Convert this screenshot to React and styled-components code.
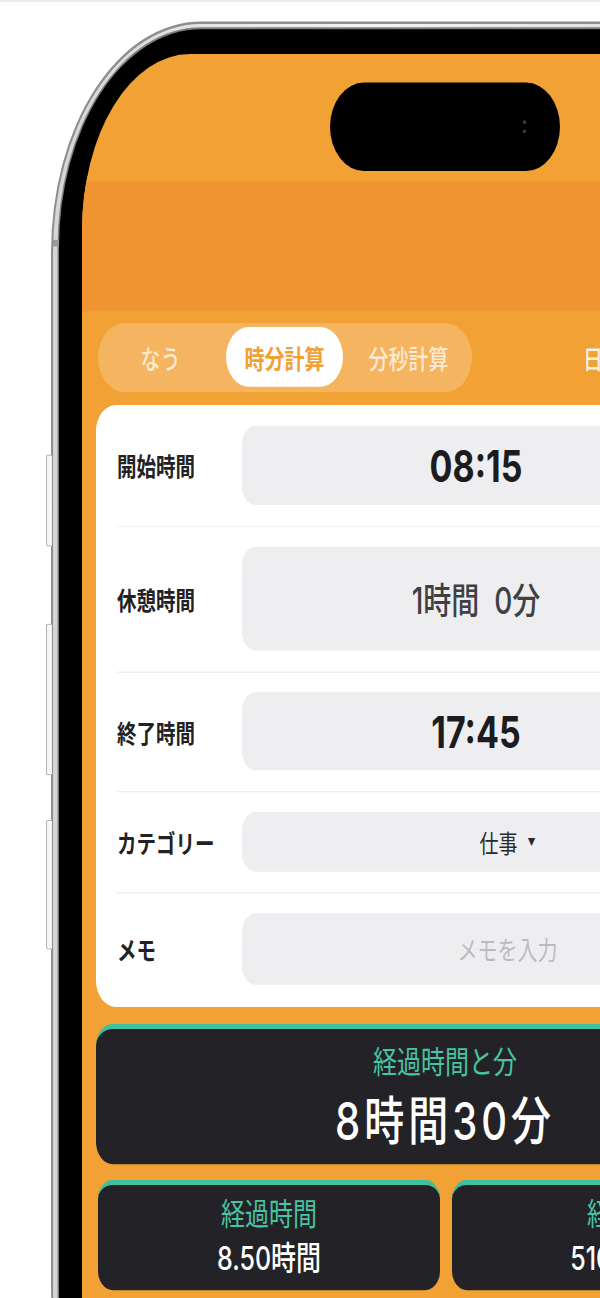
import React from 'react';
import styled, { createGlobalStyle } from 'styled-components';

const GlobalStyle = createGlobalStyle`
  html, body {
    margin: 0;
    padding: 0;
    background: #fff;
  }
  body {
    width: 600px;
    height: 1298px;
    overflow: hidden;
    font-family: Inter, "Noto Sans CJK JP", sans-serif;
  }
`;

const Page = styled.div`
  border-top: 2px solid #ececec;
  height: 1296px;
  overflow: hidden;
`;

// the reference is stretched vertically, so the whole mockup is scaled the same way
const Stage = styled.div`
  transform: scaleY(1.3);
  transform-origin: 0 0;
  padding: 15px 0 0 51px;
`;

const Phone = styled.div`
  position: relative;
  width: 790px;
  box-sizing: border-box;
  padding: 4px 6px;
  background: linear-gradient(90deg, #d6d6d8, #f4f4f4 40%, #d0d0d2);
  border: 2px solid #8e8e90;
  border-radius: 150px / 178px;
`;

const SideButton = styled.div`
  position: absolute;
  left: -7px;
  top: ${p => p.$top}px;
  height: ${p => p.$h}px;
  width: 5px;
  background: #f6f6f6;
  border: 1px solid #b3b3b5;
  border-right: none;
  border-radius: 2px 0 0 2px;
`;

const SideMark = styled.div`
  position: absolute;
  left: 0;
  top: 166px;
  width: 6px;
  height: 5px;
  background: #9a9a9c;
`;

const Bezel = styled.div`
  background: #000;
  padding: 19px 23px;
  border-radius: 142px / 168px;
  box-shadow: 0 0 0 1.5px #7d7d80;
`;

const Screen = styled.div`
  width: 726px;
  height: 1100px;
  background: #f2a134;
  border-radius: 108px / 136px;
  overflow: hidden;
  display: flex;
  flex-direction: column;
`;

const StatusArea = styled.div`
  height: 98px;
  box-sizing: border-box;
  padding-top: 22px;
  display: flex;
  justify-content: center;
`;

const Island = styled.div`
  width: 230px;
  height: 68px;
  background: #000;
  border-radius: 34px;
  display: flex;
  align-items: center;
  justify-content: flex-end;
  padding-right: 34px;
  box-sizing: border-box;
`;

const Lens = styled.div`
  display: flex;
  flex-direction: column;
  gap: 4px;
  span {
    width: 3px;
    height: 3px;
    border-radius: 50%;
    background: #3a3d48;
  }
`;

const Band = styled.div`
  height: 100px;
  background: #f09432;
`;

const Content = styled.div`
  padding: 8.5px 14px 0;
  display: flex;
  flex-direction: column;
`;

const TabRow = styled.div`
  display: flex;
  align-items: center;
`;

const Segment = styled.div`
  margin-left: 2px;
  width: 374px;
  height: 53px;
  box-sizing: border-box;
  padding: 3.5px 4px;
  display: flex;
  gap: 7px;
  border-radius: 27px;
  background: rgba(255, 255, 255, 0.22);
`;

const SegItem = styled.div`
  width: 117px;
  display: flex;
  align-items: center;
  justify-content: center;
  border-radius: 23px;
  font-size: 20px;
  font-weight: ${p => (p.$active ? 700 : 500)};
  color: ${p => (p.$active ? '#f1a035' : 'rgba(255, 255, 255, 0.72)')};
  background: ${p => (p.$active ? '#fff' : 'transparent')};
`;

const ExtraTab = styled.div`
  margin-left: 111px;
  font-size: 20px;
  font-weight: 500;
  color: rgba(255, 255, 255, 0.88);
  white-space: nowrap;
`;

const Card = styled.div`
  margin-top: 10px;
  background: #fff;
  border-radius: 20px;
  padding: 1px 21px;
`;

const Row = styled.div`
  display: flex;
  align-items: center;
  padding: 15.5px 0;
  & + & {
    border-top: 1px solid #eeeeee;
  }
`;

const Label = styled.div`
  width: 125px;
  flex-shrink: 0;
  font-size: 19.5px;
  font-weight: 600;
  color: #222224;
`;

const Field = styled.div`
  flex: 1;
  height: ${p => p.$h}px;
  margin-right: ${p => (p.$narrow ? 63 : 0)}px;
  background: #eeeef0;
  border-radius: 14px;
  display: flex;
  align-items: center;
  justify-content: center;
  gap: 10px;
`;

const TimeText = styled.span`
  font-size: 34px;
  font-weight: 700;
  color: #1c1c1e;
`;

const BreakText = styled.span`
  font-size: 28px;
  font-weight: 500;
  color: #404042;
  white-space: pre;
`;

const PlainText = styled.span`
  font-size: 19px;
  color: #2a2a2c;
`;

const Caret = styled.span`
  font-size: 8px;
  color: #2a2a2c;
`;

const Placeholder = styled.span`
  font-size: 20px;
  color: #bbbbbf;
`;

const ResultCard = styled.div`
  height: ${p => p.$h}px;
  box-sizing: border-box;
  background: #232327;
  border-top: 4px solid #3fc09e;
  border-radius: ${p => p.$r}px;
  display: flex;
  flex-direction: column;
  align-items: center;
  padding-top: ${p => p.$pt}px;
  gap: ${p => p.$gap}px;
`;

const BigCard = styled(ResultCard)`
  margin-top: 13px;
`;

const SmallGrid = styled.div`
  margin-top: 12px;
  display: grid;
  grid-template-columns: 1fr 1fr;
  gap: 12px;
  padding-left: 2px;
`;

const ResultTitle = styled.div`
  font-size: 24px;
  line-height: ${p => p.$lh}px;
  font-weight: 400;
  color: #48c3a3;
  white-space: nowrap;
`;

const BigValue = styled.div`
  font-size: 40px;
  line-height: 44px;
  font-weight: 500;
  letter-spacing: 4px;
  color: #fff;
  white-space: nowrap;
`;

const SmallValue = styled.div`
  font-size: 25px;
  line-height: 28px;
  font-weight: 500;
  color: #fff;
  white-space: nowrap;
`;

const tabs = ['なう', '時分計算', '分秒計算'];

export default function App() {
  return (
    <>
      <GlobalStyle />
      <Page>
        <Stage>
          <Phone>
            <SideMark />
            <SideButton $top={331} $h={69} />
            <SideButton $top={461} $h={115} />
            <SideButton $top={612} $h={98} />
            <Bezel>
              <Screen>
                <StatusArea>
                  <Island>
                    <Lens>
                      <span />
                      <span />
                    </Lens>
                  </Island>
                </StatusArea>
                <Band />
                <Content>
                  <TabRow>
                    <Segment>
                      {tabs.map(t => (
                        <SegItem key={t} $active={t === '時分計算'}>
                          {t}
                        </SegItem>
                      ))}
                    </Segment>
                    <ExtraTab>日付計算</ExtraTab>
                  </TabRow>

                  <Card>
                    <Row>
                      <Label>開始時間</Label>
                      <Field $h={61} $narrow>
                        <TimeText>08:15</TimeText>
                      </Field>
                    </Row>
                    <Row>
                      <Label>休憩時間</Label>
                      <Field $h={80} $narrow>
                        <BreakText>1時間  0分</BreakText>
                      </Field>
                    </Row>
                    <Row>
                      <Label>終了時間</Label>
                      <Field $h={60} $narrow>
                        <TimeText>17:45</TimeText>
                      </Field>
                    </Row>
                    <Row>
                      <Label>カテゴリー</Label>
                      <Field $h={46}>
                        <PlainText>仕事</PlainText>
                        <Caret>▼</Caret>
                      </Field>
                    </Row>
                    <Row>
                      <Label>メモ</Label>
                      <Field $h={55}>
                        <Placeholder>メモを入力</Placeholder>
                      </Field>
                    </Row>
                  </Card>

                  <BigCard $h={108} $r={17} $pt={12} $gap={9}>
                    <ResultTitle $lh={28}>経過時間と分</ResultTitle>
                    <BigValue>8時間30分</BigValue>
                  </BigCard>

                  <SmallGrid>
                    <ResultCard $h={85} $r={15} $pt={10} $gap={6}>
                      <ResultTitle $lh={26}>経過時間</ResultTitle>
                      <SmallValue>8.50時間</SmallValue>
                    </ResultCard>
                    <ResultCard $h={85} $r={15} $pt={10} $gap={6}>
                      <ResultTitle $lh={26}>経過分</ResultTitle>
                      <SmallValue>510.00分</SmallValue>
                    </ResultCard>
                  </SmallGrid>
                </Content>
              </Screen>
            </Bezel>
          </Phone>
        </Stage>
      </Page>
    </>
  );
}
